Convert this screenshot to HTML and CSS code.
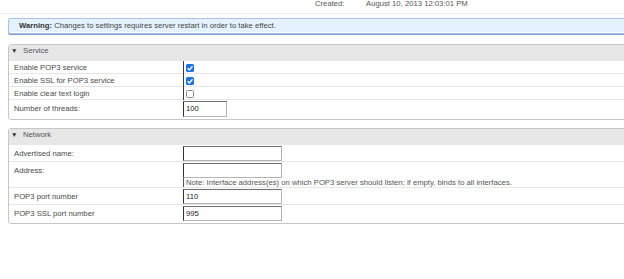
FILE: index.html
```html
<!DOCTYPE html>
<html lang="en">
<head>
<meta charset="utf-8">
<title>POP3 settings</title>
<link rel="stylesheet" href="styles.css">
</head>
<body>
<div class="meta">
  <div class="meta-line">
    <span class="meta-label">Created:</span>
    <span class="meta-value">August 10, 2013 12:03:01 PM</span>
  </div>
</div>

<div class="warning"><b>Warning:</b> Changes to settings requires server restart in order to take effect.</div>

<section class="panel">
  <div class="panel-head"><span class="tri">&#9660;</span>Service</div>
  <div class="row row-check">
    <div class="label">Enable POP3 service</div>
    <div class="value value-line"><span class="cb on"><svg viewBox="0 0 8 8" width="8" height="8"><path d="M1.6 4.3 L3.3 5.9 L6.5 2.2" fill="none" stroke="#fff" stroke-width="1.4"/></svg></span></div>
  </div>
  <div class="row row-check">
    <div class="label">Enable SSL for POP3 service</div>
    <div class="value value-line"><span class="cb on"><svg viewBox="0 0 8 8" width="8" height="8"><path d="M1.6 4.3 L3.3 5.9 L6.5 2.2" fill="none" stroke="#fff" stroke-width="1.4"/></svg></span></div>
  </div>
  <div class="row row-check">
    <div class="label">Enable clear text login</div>
    <div class="value value-line"><span class="cb"></span></div>
  </div>
  <div class="row row-input last">
    <div class="label">Number of threads:</div>
    <div class="value"><span class="field short">100</span></div>
  </div>
</section>

<section class="panel">
  <div class="panel-head"><span class="tri">&#9660;</span>Network</div>
  <div class="row row-input">
    <div class="label">Advertised name:</div>
    <div class="value"><span class="field"></span></div>
  </div>
  <div class="row row-input">
    <div class="label">Address:</div>
    <div class="value"><span class="field"></span><div class="note">Note: Interface address(es) on which POP3 server should listen; if empty, binds to all interfaces.</div></div>
  </div>
  <div class="row row-input">
    <div class="label">POP3 port number</div>
    <div class="value"><span class="field">110</span></div>
  </div>
  <div class="row row-input last">
    <div class="label">POP3 SSL port number</div>
    <div class="value"><span class="field">995</span></div>
  </div>
</section>
</body>
</html>
```
FILE: styles.css
```css
* { box-sizing: border-box; }
html, body { margin: 0; padding: 0; background: #fff; overflow: hidden; }
body {
  font-family: "Liberation Sans", Arial, sans-serif;
  font-size: 7.7px;
  color: #444;
  width: 624px;
  height: 279px;
}

.meta {
  height: 15px;
  border-bottom: 1px solid #ececec;
}
.meta-line {
  margin-top: -1px;
  padding-left: 315px;
  line-height: 10px;
  color: #555;
  display: flex;
}
.meta-label { width: 51px; }

.warning {
  margin: 4px -10px 0 8px;
  height: 16px;
  line-height: 14px;
  padding-left: 10px;
  background: #e4f2ff;
  border: 1px solid #a9c4ec;
  border-radius: 2px 0 0 2px;
  box-shadow: inset 0 -1px 0 #ffffff, 0 1px 0 #7f9dd2;
  color: #444;
}
.warning b { color: #333; }

.panel {
  margin: 10px -10px 0 8px;
  border: 1px solid #c6c6c6;
  border-radius: 3px;
}
.panel + .panel { margin-top: 8px; }

.panel-head {
  height: 15px;
  background: #e7e7e8;
  line-height: 12px;
  padding-left: 2px;
  color: #555;
  display: flex;
}
.tri {
  font-size: 6.5px;
  color: #333;
  width: 12px;
  line-height: 12px;
}

.row {
  display: grid;
  grid-template-columns: 174px 1fr;
  border-top: 1px solid #e7e7e7;
}
.label {
  padding-left: 5px;
  color: #4a4a4a;
}
.row-check { height: 13px; }
.row-check .label { line-height: 13px; }
.value-line {
  border-left: 1px solid #3a3a3a;
  display: flex;
  align-items: center;
  padding-left: 2px;
}
.cb {
  width: 8px;
  height: 8px;
  border-radius: 1.5px;
  display: block;
  border: 1px solid #8a8a8a;
  background: #fff;
}
.cb.on {
  border: none;
  background: #1a73e8;
}
.cb svg { display: block; }

.row-input { padding-top: 1px; }
.row-input .label { line-height: 15px; }
.row-input.last { padding-bottom: 2px; }
.field {
  display: block;
  width: 99px;
  height: 15px;
  border: 1px solid;
  border-color: #6e6e6e #b4b4b4 #b4b4b4 #333;
  line-height: 13px;
  padding-left: 2px;
  color: #222;
  background: #fff;
}
.field.short { width: 44px; height: 16px; line-height: 14px; }
.note {
  border-left: 1px solid #555;
  padding-left: 2px;
  line-height: 9px;
  color: #555;
  white-space: nowrap;
}
```
